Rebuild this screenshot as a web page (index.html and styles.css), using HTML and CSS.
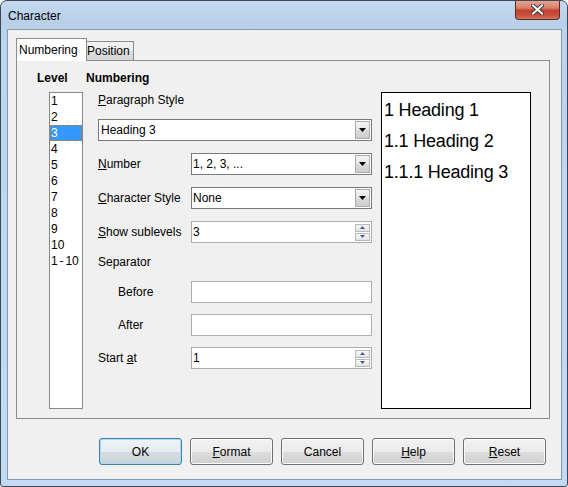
FILE: index.html
```html
<!DOCTYPE html>
<html>
<head>
<meta charset="utf-8">
<link rel="stylesheet" href="styles.css">
</head>
<body>
<div class="window">
  <div class="titlebar">
    <span class="title">Character</span>
    <div class="close">
      <svg width="13" height="11" viewBox="0 0 13 11">
        <path d="M2 1.5 L11 9.5 M11 1.5 L2 9.5" stroke="#3a3a3a" stroke-width="4" stroke-linecap="square"/>
        <path d="M2 1.5 L11 9.5 M11 1.5 L2 9.5" stroke="#ffffff" stroke-width="2" stroke-linecap="square"/>
      </svg>
    </div>
  </div>
  <div class="client">
    <div class="tabs">
      <div class="tab tab-active">Numbering</div>
      <div class="tab tab-inactive">Position</div>
    </div>
    <div class="pane">
      <div class="head">Level</div>
      <div class="head">Numbering</div>
      <div></div>
      <div class="levels">
        <div class="lvl">1</div>
        <div class="lvl">2</div>
        <div class="lvl lvl-sel">3</div>
        <div class="lvl">4</div>
        <div class="lvl">5</div>
        <div class="lvl">6</div>
        <div class="lvl">7</div>
        <div class="lvl">8</div>
        <div class="lvl">9</div>
        <div class="lvl">10</div>
        <div class="lvl lvl-all">1 - 10</div>
      </div>
      <div class="form">
        <div class="row row-first"><span><u>P</u>aragraph Style</span></div>
        <div class="row gap-m">
          <div class="select select-wide"><span>Heading 3</span>
            <div class="drop"><svg width="7" height="4" viewBox="0 0 7 4"><path d="M0 0 H7 L3.5 4 Z" fill="#000"/></svg></div>
          </div>
        </div>
        <div class="row gap-l">
          <span class="label"><u>N</u>umber</span>
          <div class="select"><span>1, 2, 3, ...</span>
            <div class="drop"><svg width="7" height="4" viewBox="0 0 7 4"><path d="M0 0 H7 L3.5 4 Z" fill="#000"/></svg></div>
          </div>
        </div>
        <div class="row gap-l">
          <span class="label"><u>C</u>haracter Style</span>
          <div class="select"><span>None</span>
            <div class="drop"><svg width="7" height="4" viewBox="0 0 7 4"><path d="M0 0 H7 L3.5 4 Z" fill="#000"/></svg></div>
          </div>
        </div>
        <div class="row gap-l">
          <span class="label"><u>S</u>how sublevels</span>
          <div class="edit"><span>3</span>
            <div class="spin">
              <div class="spin-btn"><svg width="5" height="3" viewBox="0 0 5 3"><path d="M0 3 H5 L2.5 0 Z" fill="#3d5f8f"/></svg></div>
              <div class="spin-btn"><svg width="5" height="3" viewBox="0 0 5 3"><path d="M0 0 H5 L2.5 3 Z" fill="#3d5f8f"/></svg></div>
            </div>
          </div>
        </div>
        <div class="row gap-s"><span>Separator</span></div>
        <div class="row gap-s">
          <span class="label indent">Before</span>
          <div class="edit"></div>
        </div>
        <div class="row gap-m">
          <span class="label indent">After</span>
          <div class="edit"></div>
        </div>
        <div class="row gap-m">
          <span class="label">Start <u>a</u>t</span>
          <div class="edit"><span>1</span>
            <div class="spin">
              <div class="spin-btn"><svg width="5" height="3" viewBox="0 0 5 3"><path d="M0 3 H5 L2.5 0 Z" fill="#3d5f8f"/></svg></div>
              <div class="spin-btn"><svg width="5" height="3" viewBox="0 0 5 3"><path d="M0 0 H5 L2.5 3 Z" fill="#3d5f8f"/></svg></div>
            </div>
          </div>
        </div>
      </div>
      <div class="preview">
        <div>1 Heading 1</div>
        <div>1.1 Heading 2</div>
        <div>1.1.1 Heading 3</div>
      </div>
    </div>
    <div class="buttons">
      <div class="btn btn-default">OK</div>
      <div class="btn"><span><u>F</u>ormat</span></div>
      <div class="btn">Cancel</div>
      <div class="btn"><span><u>H</u>elp</span></div>
      <div class="btn"><span><u>R</u>eset</span></div>
    </div>
  </div>
</div>
</body>
</html>
```
FILE: styles.css
```css
html, body {
  margin: 0;
  padding: 0;
  background: #ffffff;
}
body {
  font: 12px/14px "Liberation Sans", Arial, sans-serif;
  color: #000;
}
.window {
  width: 568px;
  height: 487px;
  box-sizing: border-box;
  border: 1px solid #3e4854;
  border-radius: 7px 7px 3px 3px;
  background: linear-gradient(180deg, #c4d9ef 0, #b8cfe8 22px, #bcd4ee 40px, #c2daf3 100%);
  padding: 0 5px 6px 6px;
  display: flex;
  flex-direction: column;
  overflow: hidden;
}
.titlebar {
  height: 28px;
  display: flex;
  align-items: center;
  padding-left: 1px;
}
.title {
  margin-top: 1px;
}
.close {
  margin-left: auto;
  margin-right: 2px;
  margin-top: -1px;
  align-self: flex-start;
  width: 45px;
  height: 20px;
  box-sizing: border-box;
  border: 1px solid #5e2a26;
  border-top: none;
  border-radius: 0 0 4px 4px;
  background: linear-gradient(180deg, #e9a99a 0, #d9826f 40%, #c4412f 55%, #c7503d 80%, #d5745e 100%);
  display: flex;
  align-items: center;
  justify-content: center;
}
.client {
  flex: 1;
  border: 1px solid #8497ad;
  background: #f0f0f0;
  display: flex;
  flex-direction: column;
}
.tabs {
  display: flex;
  align-items: flex-end;
  margin: 8px 0 0 8px;
}
.tab {
  box-sizing: border-box;
  border: 1px solid #898c95;
  border-bottom: none;
}
.tab-active {
  width: 71px;
  height: 23px;
  margin-bottom: -1px;
  padding: 4px 0 0 2px;
  background: #ffffff;
  position: relative;
  z-index: 1;
}
.tab-inactive {
  width: 48px;
  height: 19px;
  margin-left: -1px;
  padding: 2px 0 0 0;
  background: linear-gradient(180deg, #f3f3f3 0, #ebebeb 50%, #dedede 51%, #d5d5d5 100%);
}
.pane {
  margin: 0 11px 0 8px;
  height: 359px;
  box-sizing: border-box;
  border: 1px solid #898c95;
  background: #f0f0f0;
  padding: 10px 0 0 20px;
  display: grid;
  grid-template-columns: 46px 286px 159px;
  grid-template-rows: 14px 317px;
  column-gap: 3px;
  row-gap: 7px;
}
.head {
  font-weight: bold;
}
.levels {
  margin-left: 12px;
  width: 34px;
  height: 317px;
  box-sizing: border-box;
  border: 1px solid #828790;
  background: #ffffff;
  overflow: hidden;
}
.lvl {
  height: 16px;
  line-height: 16px;
  padding-left: 1px;
  white-space: nowrap;
}
.lvl-all {
  word-spacing: -1px;
  letter-spacing: -0.2px;
}
.lvl-sel {
  background: #3399ff;
  color: #ffffff;
  box-sizing: border-box;
  border: 1px dotted #d0761c;
  line-height: 14px;
  padding-left: 0;
}
.form {
  padding-left: 12px;
  display: flex;
  flex-direction: column;
}
.row {
  display: flex;
  align-items: center;
  height: 22px;
  white-space: nowrap;
}
.row-first {
  height: 16px;
}
.gap-s { margin-top: 8px; }
.gap-m { margin-top: 11px; }
.gap-l { margin-top: 12px; }
.label {
  width: 93px;
  flex: none;
}
.indent {
  padding-left: 20px;
  box-sizing: border-box;
}
.select, .edit {
  width: 181px;
  height: 22px;
  box-sizing: border-box;
  background: #ffffff;
  display: flex;
  align-items: center;
  padding-left: 1px;
}
.select {
  border: 1px solid #7a7a7a;
}
.select-wide {
  width: 274px;
  padding-left: 2px;
}
.edit {
  border: 1px solid #abadb3;
}
.drop {
  margin-left: auto;
  margin-right: 1px;
  width: 15px;
  height: 18px;
  box-sizing: border-box;
  border: 1px solid #acacac;
  background: linear-gradient(180deg, #f4f4f4 0, #e6e6e6 50%, #d9d9d9 51%, #cfcfcf 100%);
  display: flex;
  align-items: center;
  justify-content: center;
}
.spin {
  margin-left: auto;
  margin-right: 1px;
  display: flex;
  flex-direction: column;
  gap: 1px;
}
.spin-btn {
  width: 15px;
  height: 8px;
  box-sizing: border-box;
  border: 1px solid #b9b9b9;
  background: linear-gradient(180deg, #f7f7f7, #e2e2e2);
  display: flex;
  align-items: center;
  justify-content: center;
}
.preview {
  margin-left: 6px;
  width: 150px;
  box-sizing: border-box;
  height: 317px;
  border: 1px solid #000000;
  background: #ffffff;
  font-size: 18px;
  line-height: 31px;
  padding: 2px 0 0 2px;
  white-space: nowrap;
  letter-spacing: -0.2px;
}
.buttons {
  display: flex;
  gap: 8px;
  margin: 19px 0 0 91px;
}
.btn {
  width: 83px;
  height: 27px;
  box-sizing: border-box;
  border: 1px solid #707070;
  border-radius: 3px;
  background: linear-gradient(180deg, #f2f2f2 0, #ebebeb 50%, #dddddd 51%, #cfcfcf 100%);
  box-shadow: inset 0 0 0 1px #fbfbfb;
  display: flex;
  align-items: center;
  justify-content: center;
}
.btn-default {
  border-color: #3c7fb1;
  box-shadow: inset 0 0 0 1px #a8dcf6;
  background: linear-gradient(180deg, #eef3f6 0, #e6ecef 50%, #d5dde1 51%, #cbd3d8 100%);
}
u {
  text-decoration: underline;
  text-underline-offset: 1px;
}
```
